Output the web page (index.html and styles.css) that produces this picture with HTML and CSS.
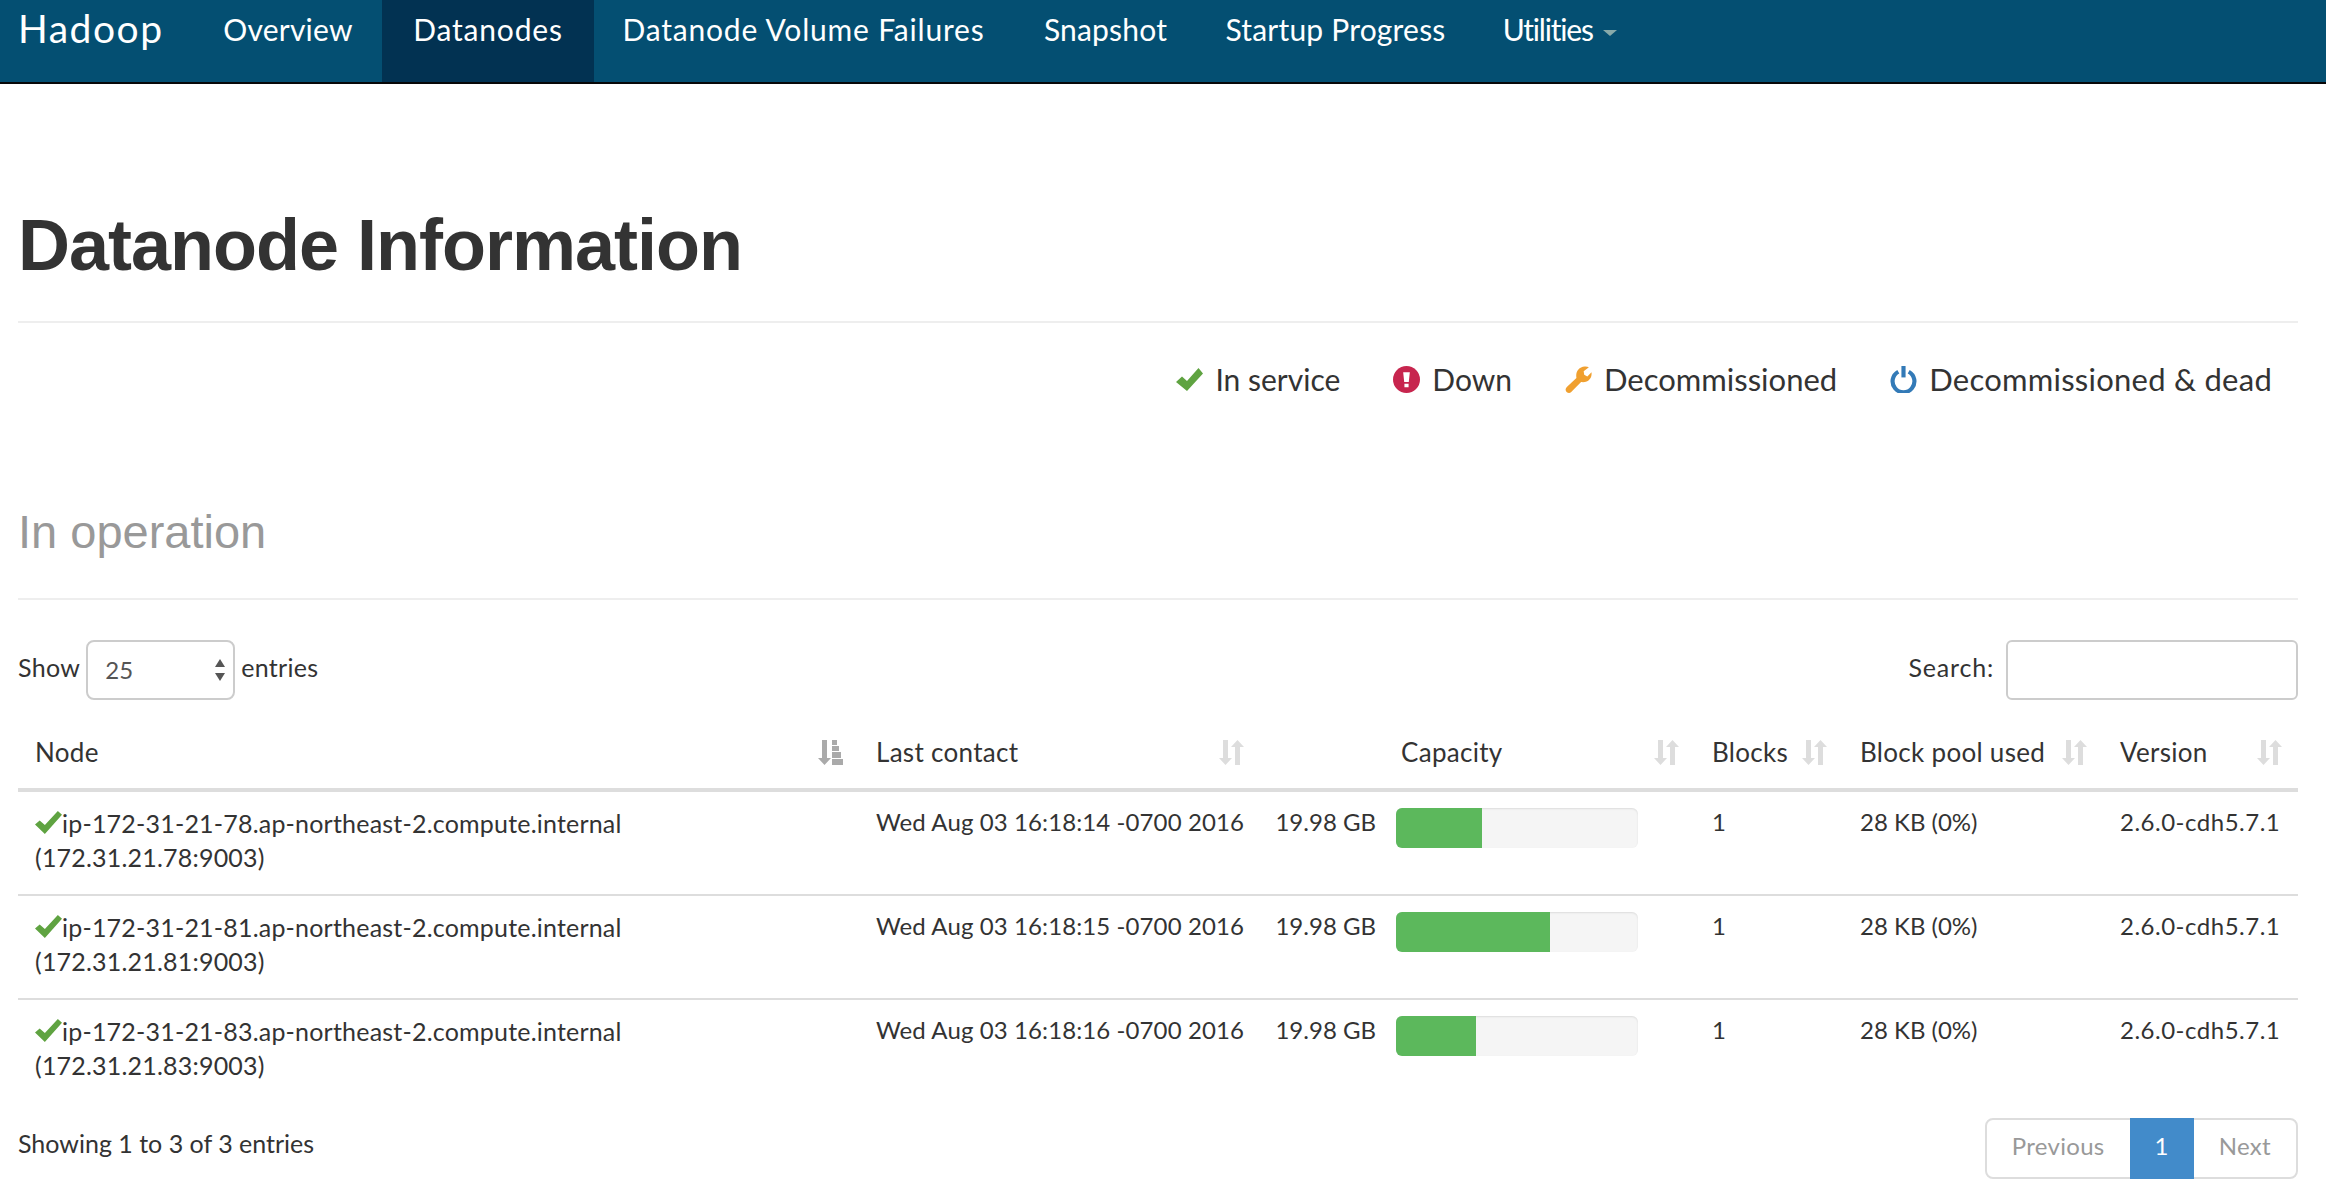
FILE: index.html
```html
<!DOCTYPE html>
<html lang="en">
<head>
    <meta charset="UTF-8">
    <title>Namenode information</title>
    <link rel="stylesheet" href="styles.css">
</head>
<body>
    <nav class="navbar">
        <a class="brand" href="#">Hadoop</a>
        <a class="nav-link" href="#">Overview</a>
        <a class="nav-link nav-wide active" href="#">Datanodes</a>
        <a class="nav-link nav-wide" href="#">Datanode Volume Failures</a>
        <a class="nav-link" href="#">Snapshot</a>
        <a class="nav-link" href="#">Startup Progress</a>
        <a class="nav-link nav-tight" href="#">Utilities <span class="caret"></span></a>
    </nav>

    <main class="page">
        <h1 class="page-title">Datanode Information</h1>

        <ul class="legend">
            <li class="legend-item legend-short">
                <svg class="legend-icon" viewBox="0 0 27 27"><path class="ok" d="M0 16l6-5.500 5 4.500L22.500 2l4.500 5.500L11 25z"/></svg>
                In service
            </li>
            <li class="legend-item legend-short">
                <svg class="legend-icon" viewBox="0 0 26 26"><circle class="down" cx="13" cy="13" r="13"/><path class="mark" d="M9.800 6h6.400l-1 9.500h-4.400zM11 17h4v3.500h-4z"/></svg>
                Down
            </li>
            <li class="legend-item">
                <svg class="legend-icon" viewBox="0 0 26 26"><path class="wrench" d="M2 20L11 11.500C10 6 13 1 19 .5c1.500-.2 3 .3 4 .7L18 5l.5 3.500L21.500 10l4-4c.8 5-2.500 10.500-10 9.500L6 25c-1.200 1.300-3 1.300-4.500 0C0 23.500.5 21.500 2 20z"/></svg>
                Decommissioned
            </li>
            <li class="legend-item legend-long">
                <svg class="legend-icon" viewBox="0 0 26 26"><path class="power" d="M8 5.500a10.500 10.500 0 1 0 10 0"/><path class="power" d="M13 0v11"/></svg>
                Decommissioned &amp; dead
            </li>
        </ul>

        <h2 class="section-title">In operation</h2>

        <div class="table-tools">
            <label class="length">
                Show
                <span class="fake-select">25
                    <svg class="select-arrows" viewBox="0 0 10 22"><path d="M5 0l5 8H0zM5 22l5-8H0z"/></svg>
                </span>
                entries
            </label>
            <label class="search">
                Search:
                <input class="search-input" type="text">
            </label>
        </div>

        <table class="nodes">
            <colgroup>
                <col class="col-node">
                <col class="col-contact">
                <col class="col-size">
                <col class="col-capacity">
                <col class="col-blocks">
                <col class="col-pool">
                <col class="col-version">
            </colgroup>
            <thead>
                <tr>
                    <th><div class="th-inner">Node <svg class="sort sorted" viewBox="0 0 26 25"><path d="M4 0h5v18h4l-6.500 7L0 18h4z"/><path d="M14 0h5v5h-5zM14 6h7v5h-7zM14 12h9v6h-9zM14 19h11v6H14z"/></svg></div></th>
                    <th><div class="th-inner">Last contact <svg class="sort" viewBox="0 0 26 25"><path d="M4 0h5v18h4l-6.500 7L0 18h4z"/><path d="M16 25h5V7h4L18.500 0 12 7h4z"/></svg></div></th>
                    <th></th>
                    <th><div class="th-inner">Capacity <svg class="sort" viewBox="0 0 26 25"><path d="M4 0h5v18h4l-6.500 7L0 18h4z"/><path d="M16 25h5V7h4L18.500 0 12 7h4z"/></svg></div></th>
                    <th><div class="th-inner">Blocks <svg class="sort" viewBox="0 0 26 25"><path d="M4 0h5v18h4l-6.500 7L0 18h4z"/><path d="M16 25h5V7h4L18.500 0 12 7h4z"/></svg></div></th>
                    <th><div class="th-inner">Block pool used <svg class="sort" viewBox="0 0 26 25"><path d="M4 0h5v18h4l-6.500 7L0 18h4z"/><path d="M16 25h5V7h4L18.500 0 12 7h4z"/></svg></div></th>
                    <th><div class="th-inner">Version <svg class="sort" viewBox="0 0 26 25"><path d="M4 0h5v18h4l-6.500 7L0 18h4z"/><path d="M16 25h5V7h4L18.500 0 12 7h4z"/></svg></div></th>
                </tr>
            </thead>
            <tbody>
                <tr>
                    <td class="node-cell"><svg class="row-ok" viewBox="0 0 26 22"><path class="ok" d="M0 13l4.500-4 5 4.500L22 0l4 3.500L9.500 22z"/></svg>ip-172-31-21-78.ap-northeast-2.compute.internal<br>(172.31.21.78:9003)</td>
                    <td class="date-cell">Wed Aug 03 16:18:14 -0700 2016</td>
                    <td class="size-cell">19.98 GB</td>
                    <td class="bar-cell"><div class="progress"><div class="progress-bar" style="width: 35.5%"></div></div></td>
                    <td>1</td>
                    <td>28 KB (0%)</td>
                    <td class="version-cell">2.6.0-cdh5.7.1</td>
                </tr>
                <tr>
                    <td class="node-cell"><svg class="row-ok" viewBox="0 0 26 22"><path class="ok" d="M0 13l4.500-4 5 4.500L22 0l4 3.500L9.500 22z"/></svg>ip-172-31-21-81.ap-northeast-2.compute.internal<br>(172.31.21.81:9003)</td>
                    <td class="date-cell">Wed Aug 03 16:18:15 -0700 2016</td>
                    <td class="size-cell">19.98 GB</td>
                    <td class="bar-cell"><div class="progress"><div class="progress-bar" style="width: 63.6%"></div></div></td>
                    <td>1</td>
                    <td>28 KB (0%)</td>
                    <td class="version-cell">2.6.0-cdh5.7.1</td>
                </tr>
                <tr>
                    <td class="node-cell"><svg class="row-ok" viewBox="0 0 26 22"><path class="ok" d="M0 13l4.500-4 5 4.500L22 0l4 3.500L9.500 22z"/></svg>ip-172-31-21-83.ap-northeast-2.compute.internal<br>(172.31.21.83:9003)</td>
                    <td class="date-cell">Wed Aug 03 16:18:16 -0700 2016</td>
                    <td class="size-cell">19.98 GB</td>
                    <td class="bar-cell"><div class="progress"><div class="progress-bar" style="width: 33%"></div></div></td>
                    <td>1</td>
                    <td>28 KB (0%)</td>
                    <td class="version-cell">2.6.0-cdh5.7.1</td>
                </tr>
            </tbody>
        </table>

        <div class="table-foot">
            <div class="foot-info">Showing 1 to 3 of 3 entries</div>
            <div class="pagination">
                <a class="page-btn prev" href="#">Previous</a>
                <a class="page-btn current" href="#">1</a>
                <a class="page-btn next" href="#">Next</a>
            </div>
        </div>
    </main>
</body>
</html>
```

FILE: styles.css
```css
body {
    margin: 0;
    font-family: 'Lato', sans-serif;
    font-size: 24px;
    line-height: 34px;
    color: #333;
    background-color: #fff;
}
.navbar {
    display: grid;
    grid-template-columns: 194px 188px 212px 419px 185px 275px 174px;
    height: 82px;
    background-color: #044f72;
    border-bottom: 2px solid #080808;
    font-size: 30px;
    letter-spacing: 0.2px;
}
.brand {
    padding: 8px 0 0 18px;
    font-size: 39px;
    line-height: 40px;
    letter-spacing: 1.5px;
    color: #fff;
    text-decoration: none;
}
.nav-link {
    padding-top: 11px;
    line-height: 36px;
    text-align: center;
    color: #fff;
    text-decoration: none;
}
.nav-wide {
    letter-spacing: 0.8px;
}
.nav-tight {
    letter-spacing: -1.2px;
}
.nav-link.active {
    background-color: #023252;
}
.caret {
    display: inline-block;
    margin-left: 4px;
    vertical-align: middle;
    border-top: 6px solid #8aa;
    border-left: 7px solid transparent;
    border-right: 7px solid transparent;
}
.page {
    padding: 0 28px 0 18px;
}
.page-title {
    margin: 0;
    padding: 122px 0 37px;
    height: 78px;
    font-family: 'Liberation Sans', sans-serif;
    font-size: 72px;
    line-height: 78px;
    font-weight: bold;
    letter-spacing: -1px;
    color: #333;
    border-bottom: 2px solid #eee;
}
.legend {
    display: flex;
    justify-content: flex-end;
    gap: 53px;
    margin: 0;
    padding: 38px 26px 0 0;
    list-style: none;
    font-size: 31px;
    line-height: 36px;
}
.legend-item {
    display: flex;
    align-items: center;
    gap: 12px;
}
.legend-short {
    font-size: 30px;
}
.legend-long {
    letter-spacing: 0.25px;
}
.legend-icon {
    width: 27px;
    height: 27px;
}
.ok {
    fill: #5fa341;
}
.down {
    fill: #c7254e;
}
.mark {
    fill: #fff;
}
.wrench {
    fill: #f0a030;
}
.power {
    fill: none;
    stroke: #337ab7;
    stroke-width: 4;
}
.section-title {
    margin: 0;
    padding: 110px 0 41px;
    font-family: 'Liberation Sans', sans-serif;
    font-size: 47px;
    line-height: 50px;
    font-weight: normal;
    color: #999;
    border-bottom: 2px solid #eee;
}
.table-tools {
    display: flex;
    justify-content: space-between;
    align-items: center;
    padding-top: 40px;
    height: 60px;
    font-size: 25px;
    line-height: 54px;
    letter-spacing: 0.3px;
}
.length, .search {
    display: flex;
    align-items: flex-start;
    gap: 6px;
}
.search {
    gap: 12px;
    letter-spacing: 0.8px;
}
.fake-select {
    display: flex;
    justify-content: space-between;
    align-items: center;
    box-sizing: border-box;
    width: 149px;
    height: 60px;
    padding: 0 8px 0 17px;
    border: 2px solid #ccc;
    border-radius: 8px;
    font-size: 24px;
    color: #555;
}
.select-arrows {
    width: 10px;
    height: 22px;
    fill: #555;
}
.search-input {
    box-sizing: border-box;
    width: 292px;
    height: 60px;
    border: 2px solid #ccc;
    border-radius: 6px;
}
.nodes {
    width: 2280px;
    table-layout: fixed;
    border-collapse: collapse;
    margin-top: 16px;
}
.col-node { width: 841px; }
.col-contact { width: 401px; }
.col-size { width: 124px; }
.col-capacity { width: 311px; }
.col-blocks { width: 148px; }
.col-pool { width: 260px; }
.col-version { width: 195px; }
.nodes th {
    padding: 0 15px 0 17px;
    height: 72px;
    font-size: 26px;
    font-weight: normal;
    letter-spacing: 0.3px;
    text-align: left;
    border-bottom: 4px solid #ddd;
}
.th-inner {
    display: flex;
    justify-content: space-between;
    align-items: center;
}
.sort {
    flex: none;
    width: 26px;
    height: 25px;
    fill: #ddd;
}
.sort.sorted {
    fill: #aaa;
}
.nodes td {
    padding: 13px 17px 0;
    vertical-align: top;
    white-space: nowrap;
    border-bottom: 2px solid #ddd;
}
.nodes tbody tr:last-child td {
    border-bottom: none;
}
.nodes td.node-cell {
    padding: 14px 0 20px 17px;
    font-size: 25px;
    letter-spacing: 0.2px;
}
.row-ok {
    width: 27px;
    height: 23px;
    vertical-align: -1px;
}
.date-cell {
    letter-spacing: 0.1px;
}
.version-cell {
    letter-spacing: 0.5px;
}
.nodes td.size-cell {
    padding-left: 0;
    padding-right: 8px;
    text-align: right;
}
.nodes td.bar-cell {
    padding-left: 12px;
    padding-right: 57px;
}
.progress {
    height: 40px;
    margin-top: 3px;
    background-color: #f5f5f5;
    border-radius: 6px;
    overflow: hidden;
    box-shadow: inset 0 1px 2px rgba(0, 0, 0, 0.1);
}
.progress-bar {
    height: 100%;
    background-color: #5cb85c;
}
.table-foot {
    display: flex;
    justify-content: space-between;
    align-items: flex-start;
    margin-top: 16px;
}
.foot-info {
    padding-top: 8px;
    font-size: 25px;
}
.pagination {
    display: flex;
    box-sizing: border-box;
    height: 61px;
    border: 2px solid #ddd;
    border-radius: 8px;
    letter-spacing: 0.3px;
}
.page-btn {
    padding: 0 25px;
    line-height: 52px;
    color: #999;
    text-decoration: none;
}
.page-btn.current {
    margin: -2px 0;
    line-height: 56px;
    background-color: #428bca;
    color: #fff;
}
```
